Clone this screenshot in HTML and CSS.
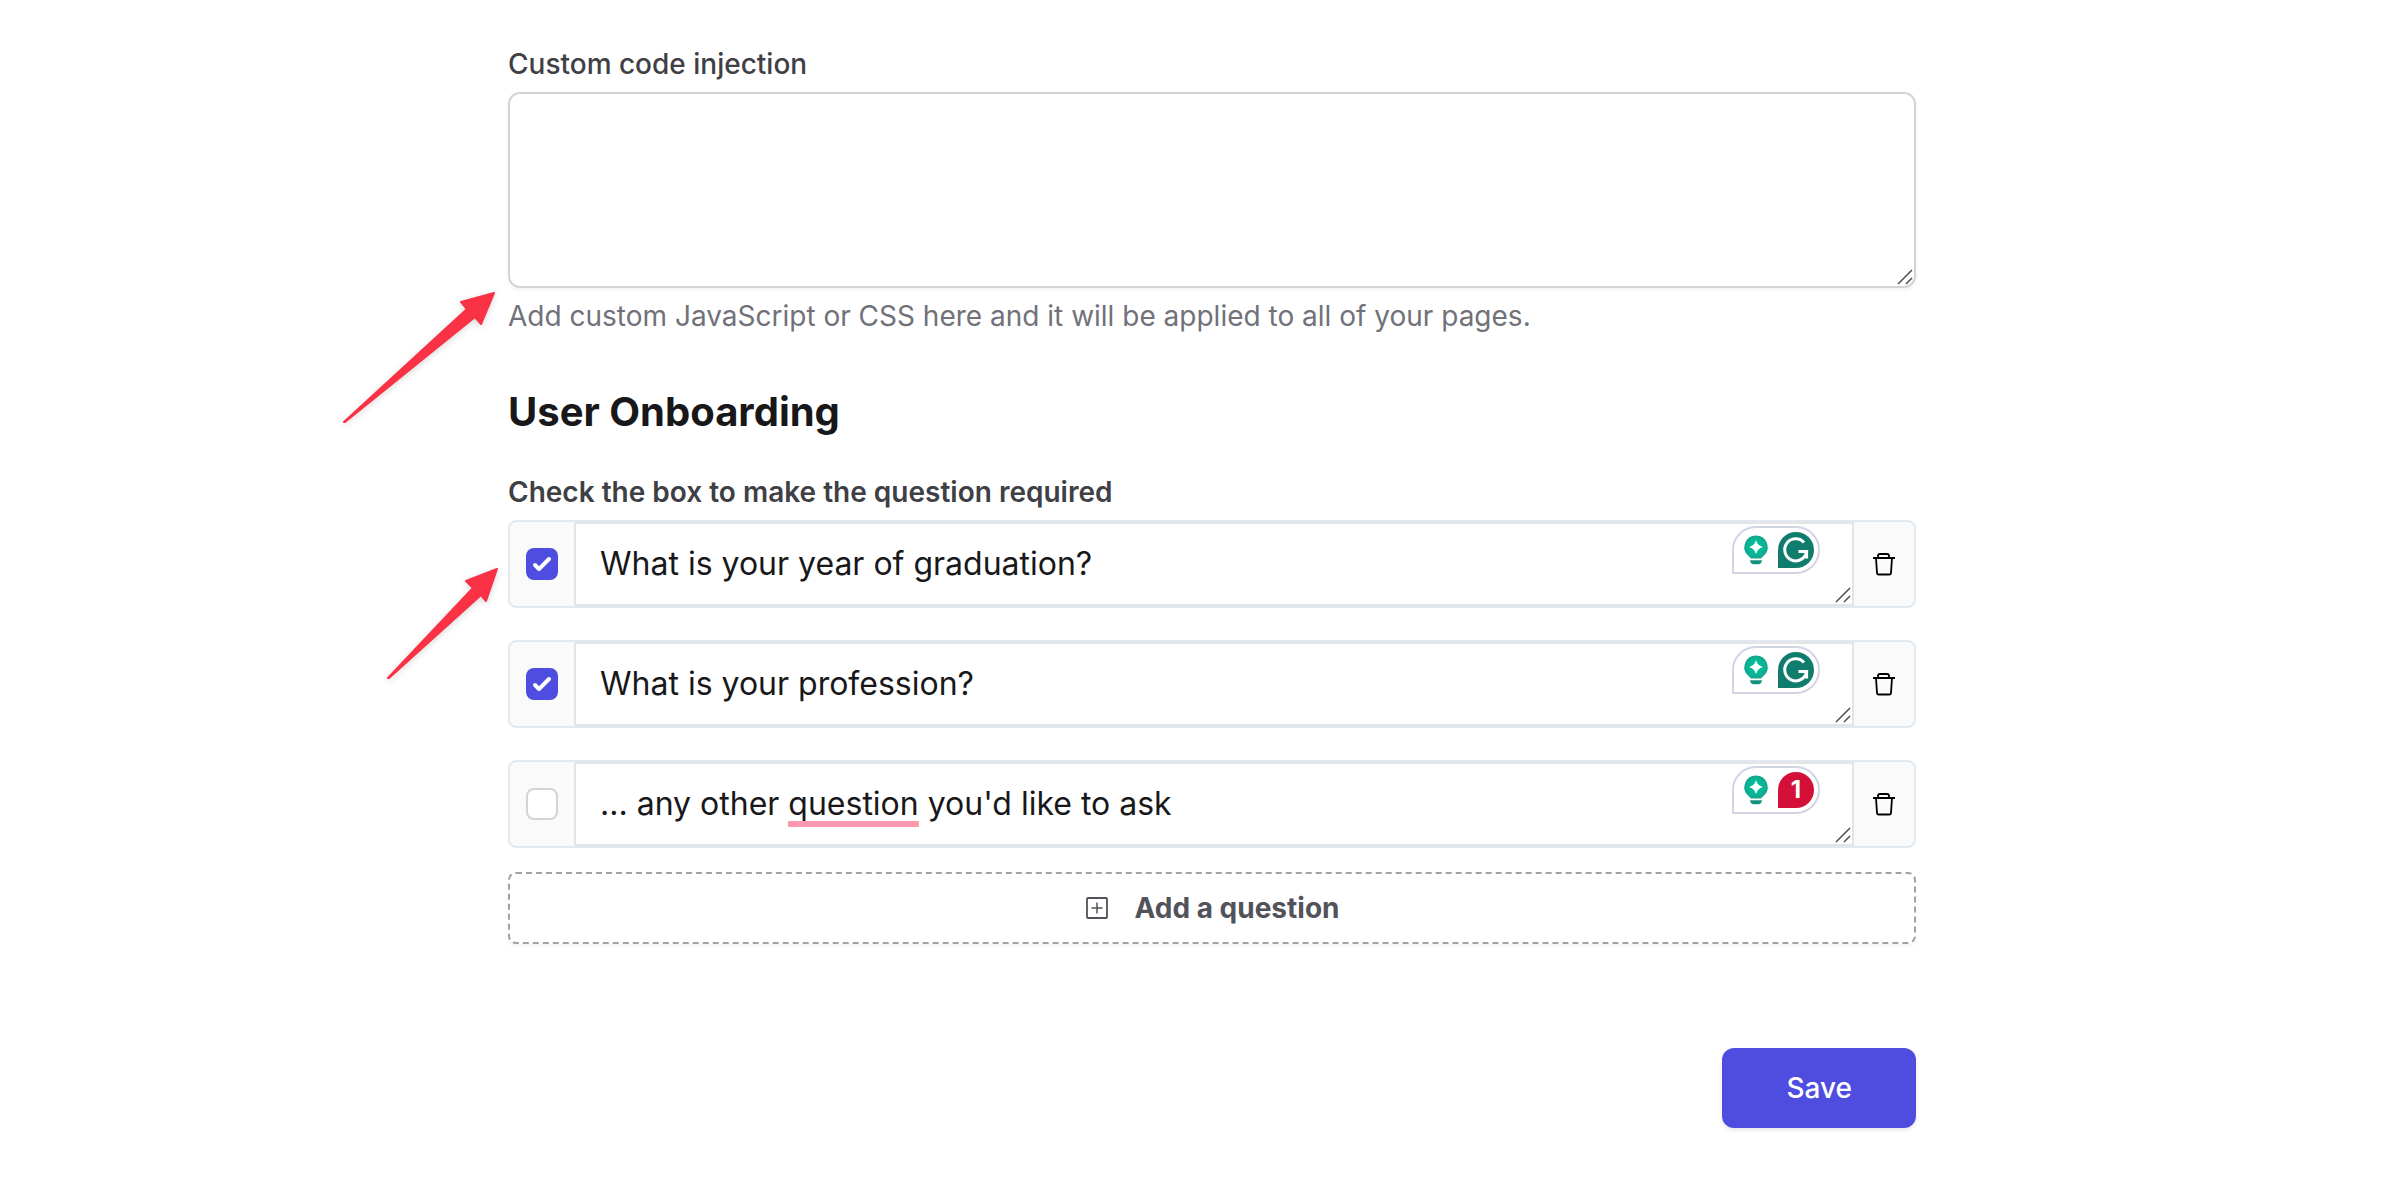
FILE: index.html
```
<!DOCTYPE html>
<html lang="en">
<head>
    <meta charset="UTF-8">
    <meta name="viewport" content="width=device-width, initial-scale=1.0">
    <title>User Onboarding</title>
    <link rel="stylesheet" href="styles.css">
</head>
<body>

    <svg class="sprite" aria-hidden="true">
        <defs>
            <radialGradient id="bulb-fill">
                <stop offset="0.4" stop-color="#00bf9a"/>
                <stop offset="1" stop-color="#15a68c"/>
            </radialGradient>
        </defs>
        <symbol id="grip" viewBox="0 0 16 16">
            <path d="M1 15L15 1M9 15L15 9" stroke="#555" stroke-width="1.6" fill="none"/>
        </symbol>
        <symbol id="bulb" viewBox="0 0 24 30">
            <path d="M12 0.5A11.6 11.6 0 0 1 19.2 21.2Q17.5 22.5 17.2 23.6H6.8Q6.5 22.5 4.8 21.2A11.6 11.6 0 0 1 12 0.5Z" fill="url(#bulb-fill)"/>
            <path d="M12 5Q13.4 10.6 19 12Q13.4 13.4 12 19Q10.6 13.4 5 12Q10.6 10.6 12 5Z" fill="#fff"/>
            <path d="M6 25.2H18Q17.6 29.3 14 29.3H10Q6.4 29.3 6 25.2Z" fill="#15917f"/>
        </symbol>
        <symbol id="grammar" viewBox="0 0 36 36">
            <path d="M0 36V18A18 18 0 1 1 18 36Z" fill="#107c6c"/>
            <path d="M26 10.6A11 11 0 1 0 28.6 19.5H20.5M28.6 18V26.5" stroke="#fff" stroke-width="3" fill="none"/>
        </symbol>
        <symbol id="trash" viewBox="0 0 24 24">
            <path d="M1 6H23M6 6V4Q6 2 8 2H15Q17 2 17 4V6M4 6L5 21Q5 22.5 6.5 22.5H17.5Q19 22.5 19 21L20 6" stroke="#000" stroke-width="1.8" fill="none"/>
        </symbol>
    </svg>

    <main class="settings">
        <form onsubmit="return false">
            <div class="field">
                <label for="custom-code">Custom code injection</label>
                <div class="code-box">
                    <textarea id="custom-code"></textarea>
                    <svg class="grip"><use href="#grip"/></svg>
                </div>
                <p class="help">Add custom JavaScript or CSS here and it will be applied to all of your pages.</p>
                <svg class="arrow arrow-code" width="160" height="140" viewBox="0 0 160 140">
                    <path d="M154 5L121 14L127 21L4 134L5 134L135 29L141 36Z"/>
                </svg>
            </div>

            <h2>User Onboarding</h2>

            <div class="onboarding">
                <p class="list-label">Check the box to make the question required</p>
                <div class="questions">
                    <div class="question">
                        <div class="check"><input type="checkbox" aria-label="Required" checked></div>
                        <div class="text">
                            <textarea rows="1" aria-label="Question 1" spellcheck="false">What is your year of graduation?</textarea>
                            <div class="helper">
                                <svg width="24" height="30"><use href="#bulb"/></svg>
                                <svg width="36" height="36"><use href="#grammar"/></svg>
                            </div>
                            <svg class="grip"><use href="#grip"/></svg>
                        </div>
                        <button type="button" class="remove" aria-label="Delete question"><svg width="24" height="24"><use href="#trash"/></svg></button>
                    </div>

                    <div class="question">
                        <div class="check"><input type="checkbox" aria-label="Required" checked></div>
                        <div class="text">
                            <textarea rows="1" aria-label="Question 2" spellcheck="false">What is your profession?</textarea>
                            <div class="helper">
                                <svg width="24" height="30"><use href="#bulb"/></svg>
                                <svg width="36" height="36"><use href="#grammar"/></svg>
                            </div>
                            <svg class="grip"><use href="#grip"/></svg>
                        </div>
                        <button type="button" class="remove" aria-label="Delete question"><svg width="24" height="24"><use href="#trash"/></svg></button>
                    </div>

                    <div class="question">
                        <div class="check"><input type="checkbox" aria-label="Required"></div>
                        <div class="text">
                            <textarea rows="1" aria-label="Question 3" spellcheck="false">... any other question you'd like to ask</textarea>
                            <span class="typo"></span>
                            <div class="helper">
                                <svg width="24" height="30"><use href="#bulb"/></svg>
                                <span class="count">1</span>
                            </div>
                            <svg class="grip"><use href="#grip"/></svg>
                        </div>
                        <button type="button" class="remove" aria-label="Delete question"><svg width="24" height="24"><use href="#trash"/></svg></button>
                    </div>
                </div>
                <svg class="arrow arrow-list" width="124" height="120" viewBox="0 0 124 120">
                    <path d="M117 5L86 17L93 24L8 114L9 114L101 31L106 37Z"/>
                </svg>
            </div>

            <button type="button" class="add">
                <svg width="24" height="24" viewBox="0 0 24 24" fill="none" stroke="#52525b">
                    <rect x="2" y="2" width="20" height="20" rx="1" stroke-width="1.8"/>
                    <path d="M12 6.5V17.5M6.5 12H17.5" stroke-width="1.5"/>
                </svg>
                Add a question
            </button>

            <div class="actions">
                <button type="submit" class="save">Save</button>
            </div>
        </form>
    </main>

</body>
</html>
```
FILE: styles.css
```
* {
    box-sizing: border-box;
}
body {
    font-family: Inter, "Liberation Sans", sans-serif;
    font-size: 28px;
    line-height: 40px;
    color: #3f3f46;
    background-color: #fff;
    margin: 0;
    padding: 44px 0 56px 36px;
}
.sprite {
    position: absolute;
    width: 0;
    height: 0;
}
.settings {
    max-width: 1408px;
    margin: 0 auto;
}
textarea,
button {
    font-family: inherit;
}
textarea {
    display: block;
    width: 100%;
    margin: 0;
    resize: none;
    background-color: #fff;
    outline: none;
}
button {
    cursor: pointer;
}
.field,
.onboarding,
.code-box {
    position: relative;
}
.field label {
    display: block;
    font-weight: 500;
    margin-bottom: 8px;
}
.code-box textarea {
    height: 196px;
    padding: 16px 24px;
    font-size: 28px;
    border: 2px solid #d4d4d8;
    border-radius: 12px;
    box-shadow: 0 2px 4px rgba(0, 0, 0, 0.05);
}
.grip {
    position: absolute;
    right: 3px;
    bottom: 3px;
    width: 16px;
    height: 16px;
    pointer-events: none;
}
.help {
    color: #71717a;
    margin: 8px 0 0;
}
h2 {
    font-size: 40px;
    line-height: 48px;
    font-weight: 700;
    color: #18181b;
    margin: 52px 0 36px;
}
.list-label {
    font-weight: 600;
    margin: 0 0 8px;
}
.questions {
    display: flex;
    flex-direction: column;
    gap: 32px;
}
.question {
    display: flex;
    background-color: #fafafa;
    border: 2px solid #e2e8f0;
    border-radius: 8px;
}
.check {
    display: flex;
    align-items: center;
    justify-content: center;
    width: 64px;
}
.check input {
    appearance: none;
    width: 32px;
    height: 32px;
    margin: 0;
    background-color: #fff;
    border: 2px solid #d4d4d8;
    border-radius: 8px;
}
.check input:checked {
    border: none;
    background: #4f4ddf url("data:image/svg+xml,%3Csvg xmlns='http://www.w3.org/2000/svg' viewBox='0 0 16 16' fill='white'%3E%3Cpath d='M12.207 4.793a1 1 0 010 1.414l-5 5a1 1 0 01-1.414 0l-2-2a1 1 0 011.414-1.414L6.5 9.086l4.293-4.293a1 1 0 011.414 0z'/%3E%3C/svg%3E") center / 100%;
}
.text {
    position: relative;
    flex: 1;
}
.text textarea {
    height: 84px;
    padding: 16px 24px;
    font-size: 32px;
    line-height: 48px;
    color: #18181b;
    border: 2px solid #e4e4e7;
    border-radius: 0;
    overflow: hidden;
}
.typo {
    position: absolute;
    left: 214px;
    bottom: 19px;
    width: 131px;
    height: 6px;
    background-color: #ff9aae;
}
.helper {
    position: absolute;
    top: 4px;
    right: 34px;
    display: flex;
    align-items: center;
    gap: 10px;
    width: 88px;
    height: 48px;
    padding: 0 4px 0 10px;
    background-color: #fff;
    border: 2px solid #d2d4e4;
    border-radius: 24px 24px 24px 0;
}
.count {
    width: 36px;
    height: 36px;
    font-size: 24px;
    line-height: 36px;
    font-weight: 700;
    text-align: center;
    color: #fff;
    background-color: #d40f38;
    border-radius: 18px 18px 18px 0;
}
.remove {
    display: flex;
    align-items: center;
    justify-content: center;
    width: 60px;
    padding: 0;
    background: none;
    border: none;
}
.add {
    display: flex;
    align-items: center;
    justify-content: center;
    gap: 26px;
    width: 100%;
    height: 72px;
    margin-top: 24px;
    font-size: 28px;
    font-weight: 700;
    color: #52525b;
    background-color: #fff;
    border: 2px dashed #a1a1aa;
    border-radius: 8px;
    box-shadow: 0 2px 4px rgba(0, 0, 0, 0.05);
}
.actions {
    display: flex;
    justify-content: flex-end;
    margin-top: 104px;
}
.save {
    height: 80px;
    padding: 0 64px;
    font-size: 28px;
    font-weight: 500;
    color: #fff;
    background-color: #4f4ddf;
    border: none;
    border-radius: 12px;
    box-shadow: 0 2px 4px rgba(0, 0, 0, 0.1);
}
.arrow {
    position: absolute;
    fill: #fa3246;
    stroke: #fa3246;
    stroke-width: 2;
    stroke-linejoin: round;
    filter: drop-shadow(0 2px 3px rgba(0, 0, 0, 0.15));
}
.arrow-code {
    left: -168px;
    top: 244px;
}
.arrow-list {
    left: -128px;
    top: 92px;
}
```
